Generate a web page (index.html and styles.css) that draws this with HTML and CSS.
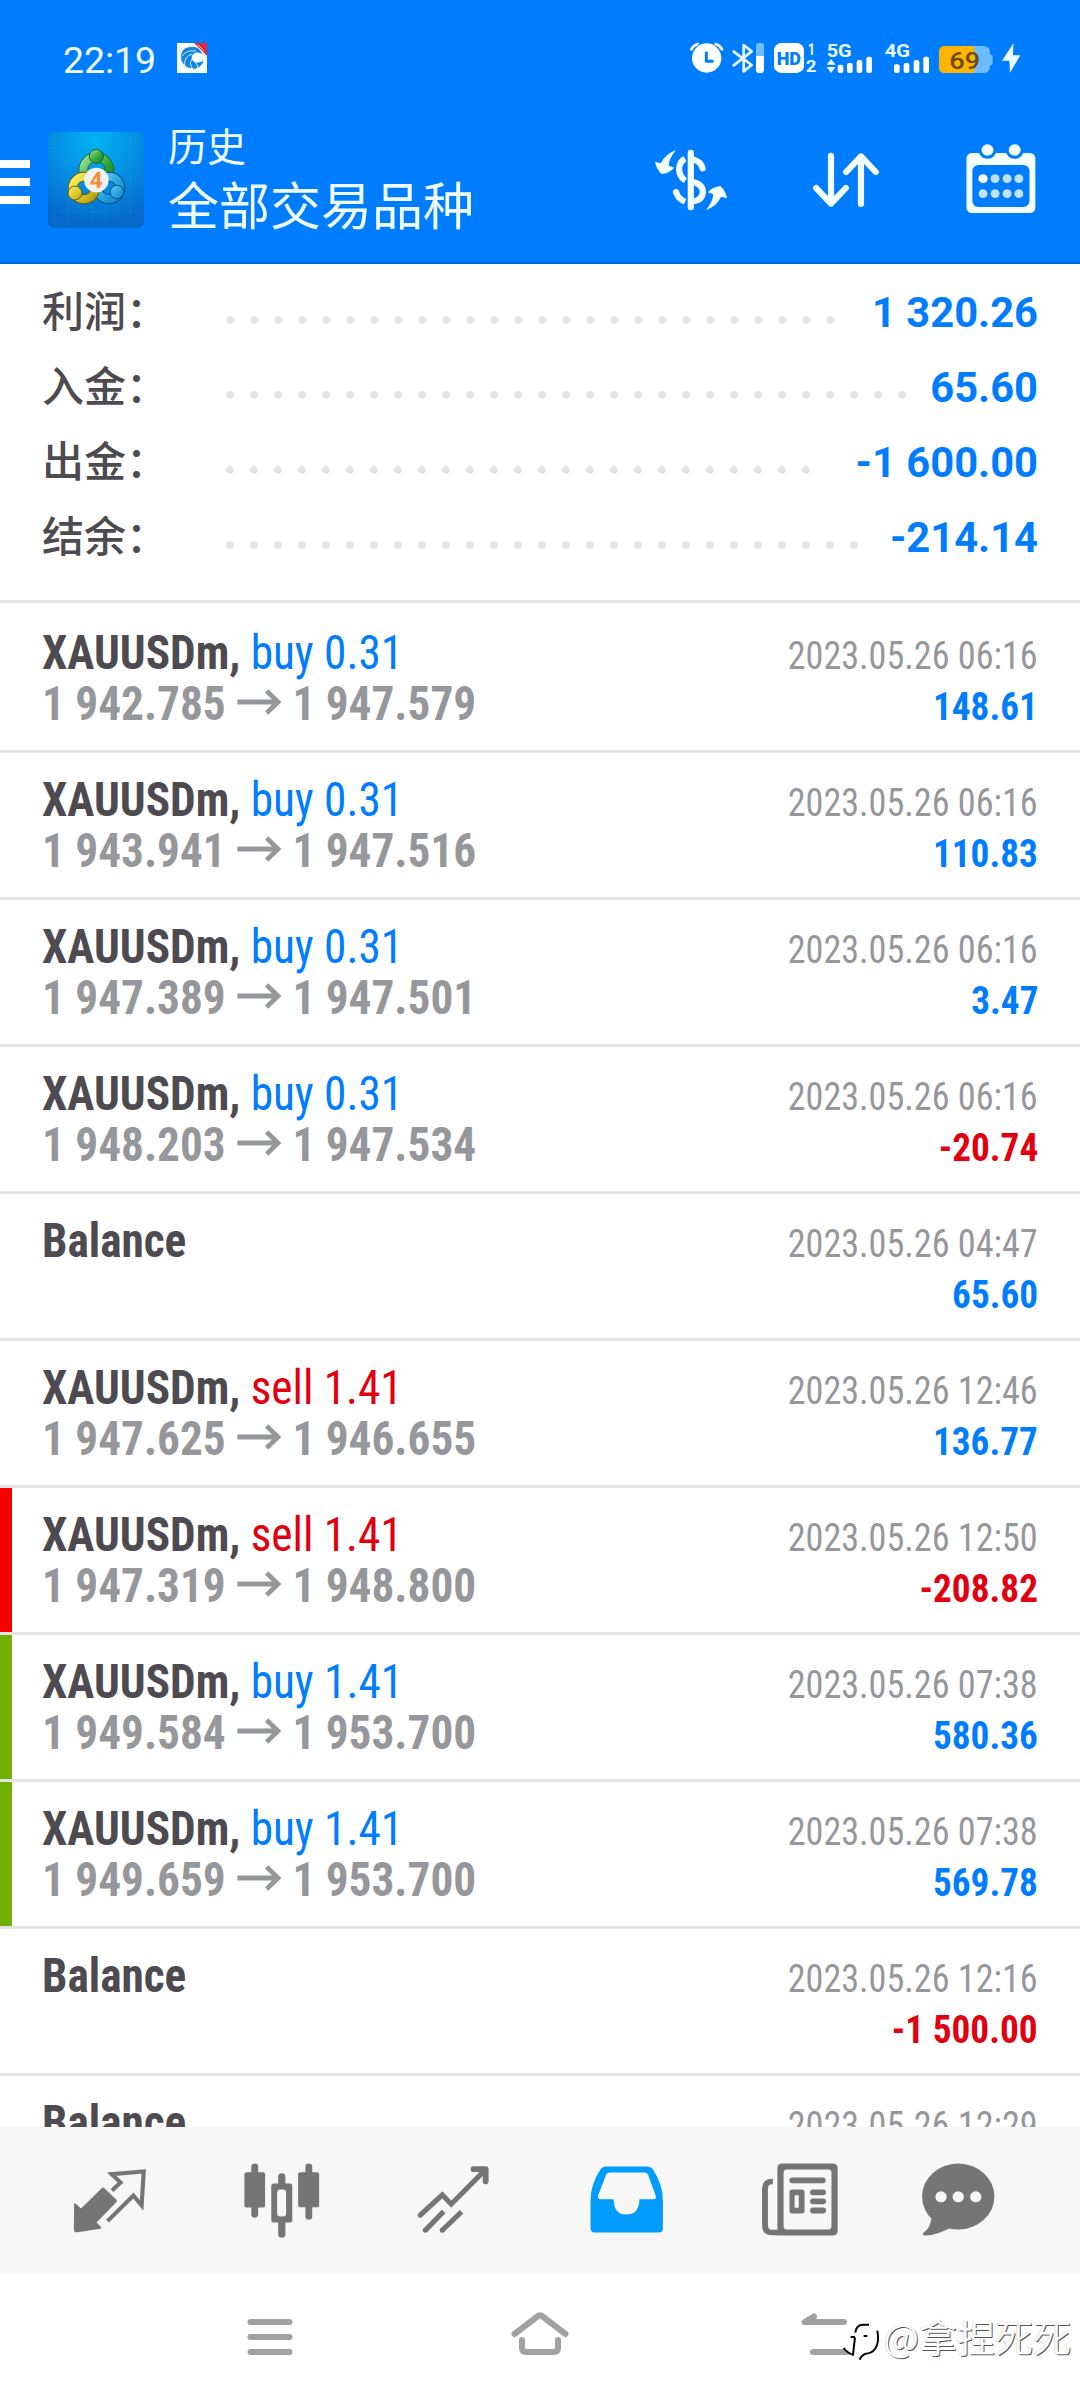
FILE: index.html
```html
<!DOCTYPE html>
<html lang="zh-CN">
<head>
<meta charset="utf-8">
<title>历史</title>
<link rel="stylesheet" href="styles.css">
</head>
<body>
<div class="screen">
  <header class="header">
    <div class="status">
      <span class="clock">22:19</span>
      <svg class="notif" viewBox="411 40 90 90">
        <rect x="411" y="40" width="90" height="90" fill="#f4ffff"/>
        <path d="M424 92 Q418 56 450 52 Q470 48 480 62 L488 74 Q476 66 464 70 Q452 76 456 90 Q464 102 478 98 Q488 96 491 90 Q488 110 466 117 Q434 118 424 92Z" fill="#1285e0"/>
        <path d="M426 80 Q438 60 468 64 M434 106 Q432 80 456 74 M458 118 Q446 100 456 88 M474 116 Q474 106 466 98" fill="none" stroke="#f4ffff" stroke-width="2.500"/>
        <path d="M462 40 H501 V78 Z" fill="#e5263c"/>
        <path d="M474 46 L492 64" stroke="#ffb0b0" stroke-width="3"/>
      </svg>
      <div class="indicators">
        <svg width="50" height="60" viewBox="0 0 150 180">
          <circle cx="80" cy="84" r="44" fill="#fff"/>
          <path d="M79 68 V94 H97" fill="none" stroke="#007dff" stroke-width="9" stroke-linejoin="round" stroke-linecap="round"/>
          <path d="M34 58 Q40 46 53 42 M107 42 Q120 46 126 58" fill="none" stroke="#fff" stroke-width="8" stroke-linecap="round"/>
        </svg>
        <svg width="40" height="60" viewBox="150 0 120 180">
          <path d="M161 65 L215 105 L191 124 V45 L215 64 L161 106" fill="none" stroke="#e8fbff" stroke-width="8" stroke-linejoin="round" stroke-linecap="round"/>
          <rect x="228" y="40" width="24" height="89" rx="10" fill="#fff"/>
          <path d="M228 78 V50 Q228 40 238 40 H242 Q252 40 252 50 V78 Z" fill="#6cbcff"/>
        </svg>
        <svg width="50" height="60" viewBox="270 0 150 180">
          <rect x="282" y="39" width="90" height="90" rx="22" fill="#fff"/>
          <text x="290" y="104" class="mark heavy" font-size="53" textLength="73" lengthAdjust="spacingAndGlyphs" fill="#007dff">HD</text>
          <text x="383" y="76" class="mark" font-size="50" textLength="22" lengthAdjust="spacingAndGlyphs" fill="#e8fbff">1</text>
          <text x="377" y="126" class="mark" font-size="50" textLength="32" lengthAdjust="spacingAndGlyphs" fill="#e8fbff">2</text>
        </svg>
        <svg width="60" height="60" viewBox="420 0 180 180">
          <text x="440" y="82" class="mark" font-size="56" textLength="75" lengthAdjust="spacingAndGlyphs" fill="#e8fbff">5G</text>
          <path d="M440 104 L453 87 L467 104 Z M440 111 H467 L453 129 Z" fill="#e8fbff"/>
          <g fill="#fff"><rect x="473" y="104" width="17" height="25" rx="6"/><rect x="501" y="99" width="17" height="30" rx="6"/><rect x="530" y="90" width="17" height="39" rx="6"/><rect x="559" y="80" width="17" height="49" rx="6"/></g>
        </svg>
        <svg width="55" height="60" viewBox="600 0 165 180">
          <text x="614" y="82" class="mark" font-size="56" textLength="76" lengthAdjust="spacingAndGlyphs" fill="#e8fbff">4G</text>
          <g fill="#fff"><rect x="642" y="103" width="17" height="26" rx="6"/><rect x="671" y="99" width="17" height="30" rx="6"/><rect x="701" y="90" width="17" height="39" rx="6"/><rect x="730" y="80" width="17" height="49" rx="6"/></g>
        </svg>
        <svg width="63" height="60" viewBox="765 0 189 180">
          <rect x="777" y="48" width="153" height="81" rx="18" fill="#6cbcff"/>
          <rect x="926" y="74" width="12" height="32" rx="5" fill="#6cbcff"/>
          <path d="M883 48 H795 Q777 48 777 66 V111 Q777 129 795 129 H883 Z" fill="#ffb400"/>
          <text x="808" y="117" class="num" font-size="72" textLength="93" lengthAdjust="spacingAndGlyphs" fill="#6b4c0c">69</text>
        </svg>
        <svg width="32" height="60" viewBox="954 0 96 180">
          <path d="M1000 40 L966 92 H988 L990 128 L1021 76 H999 Z" fill="#e8fbff"/>
        </svg>
      </div>
    </div>
    <div class="appbar">
      <svg class="menu" viewBox="0 0 30 44"><path d="M0 0H30V8H0Z M0 18H30V26H0Z M0 36H30V44H0Z" fill="#fff"/></svg>
      <svg class="logo" viewBox="24 306 288 288">
        <defs>
          <radialGradient id="bg" cx=".5" cy=".08" r=".9"><stop offset="0" stop-color="#00b4f2"/><stop offset=".5" stop-color="#048ee2"/><stop offset="1" stop-color="#0668c8"/></radialGradient>
          <linearGradient id="gr" x1="0" y1="0" x2="1" y2="1"><stop offset="0" stop-color="#9be094"/><stop offset=".6" stop-color="#2fa63c"/><stop offset="1" stop-color="#0e8a28"/></linearGradient>
          <linearGradient id="ye" x1="0" y1="0" x2="1" y2="1"><stop offset="0" stop-color="#f8f060"/><stop offset=".6" stop-color="#d8c828"/><stop offset="1" stop-color="#b09c10"/></linearGradient>
          <linearGradient id="bl" x1="0" y1="0" x2="1" y2="1"><stop offset="0" stop-color="#6cd0f8"/><stop offset=".6" stop-color="#24a0e0"/><stop offset="1" stop-color="#0a84cc"/></linearGradient>
        </defs>
        <rect x="24" y="306" width="288" height="288" rx="20" fill="url(#bg)"/>
        <path d="M44 306V594M82 306V594M120 306V594M158 306V594M196 306V594M234 306V594M272 306V594M24 354H312M24 402H312M24 450H312M24 498H312M24 546H312" stroke="#4cc0ff" stroke-opacity=".16" stroke-width="2"/>
        <circle cx="169" cy="420" r="39" fill="none" stroke="#14602c" stroke-width="29"/>
        <circle cx="169" cy="420" r="39" fill="none" stroke="url(#gr)" stroke-width="24"/>
        <circle cx="207" cy="474" r="34" fill="none" stroke="#0a4c84" stroke-width="29"/>
        <circle cx="207" cy="474" r="34" fill="none" stroke="url(#bl)" stroke-width="24"/>
        <circle cx="132" cy="474" r="34" fill="none" stroke="#5c5818" stroke-width="29"/>
        <circle cx="132" cy="474" r="34" fill="none" stroke="url(#ye)" stroke-width="24"/>
        <circle cx="169" cy="379" r="21" fill="url(#gr)" stroke="#14602c" stroke-width="3"/>
        <circle cx="105" cy="489" r="21" fill="url(#ye)" stroke="#5c5818" stroke-width="3"/>
        <circle cx="231" cy="486" r="20" fill="url(#bl)" stroke="#0a4c84" stroke-width="3"/>
        <circle cx="169" cy="450" r="37" fill="#f0f2f0"/>
        <text x="149" y="473" class="mark" font-size="67" fill="#f88c30">4</text>
      </svg>
      <div class="titles">
        <div class="title">历史</div>
        <div class="subtitle">全部交易品种</div>
      </div>
      <div class="actions">
        <svg viewBox="304.9 405 261.3 270" preserveAspectRatio="none">
          <g fill="none" stroke="#f4ffff" stroke-width="18">
            <path d="M435 458 V622" stroke-linecap="round"/>
            <path d="M442 478 Q464 484 469 505" stroke-linecap="round"/>
            <path d="M418 476 Q401 486 401 508 Q402 530 419 542"/>
            <path d="M440 546 Q470 552 470 576 Q468 602 440 604"/>
            <path d="M392 575 Q397 596 418 605"/>
          </g>
          <circle cx="392" cy="576" r="9" fill="#f4ffff"/>
          <path id="swap" d="M392 450 Q360 462 348 490 L331 485 Q334 506 350 522 Q372 520 387 503 L371 497 Q372 474 392 450Z" fill="#f4ffff"/>
          <use href="#swap" transform="rotate(180 435.5 540)"/>
        </svg>
        <svg viewBox="757.9 405 261.3 270" preserveAspectRatio="none">
          <path d="M845 467 V610 M802 564 L845 611 L888 564 M932 612 V470 M889 516 L932 469 L975 516" fill="none" stroke="#f4ffff" stroke-width="18" stroke-linecap="round" stroke-linejoin="round"/>
        </svg>
        <svg viewBox="1206.6 405 261.3 270" preserveAspectRatio="none">
          <rect x="1237" y="459" width="200" height="180" rx="16" fill="#f4ffff"/>
          <rect x="1254" y="495" width="166" height="126" rx="18" fill="#007dff"/>
          <g fill="#f4ffff" stroke="#007dff" stroke-width="9"><circle cx="1298" cy="450" r="22"/><circle cx="1377" cy="450" r="22"/></g>
          <circle cx="1285" cy="536" r="13.5" fill="#fff"/>
          <g fill="#bfe3ff"><circle cx="1320" cy="536" r="13"/><circle cx="1355" cy="536" r="13"/><circle cx="1389" cy="536" r="13"/><circle cx="1285" cy="581" r="13"/><circle cx="1320" cy="581" r="13"/><circle cx="1355" cy="581" r="13"/><circle cx="1389" cy="581" r="13"/></g>
        </svg>
      </div>
    </div>
  </header>

  <main class="content">
    <section class="summary">
      <div class="sum"><span class="label">利润：</span><i class="dots" style="--dots:26"></i><b>1 320.26</b></div>
      <div class="sum"><span class="label">入金：</span><i class="dots" style="--dots:29"></i><b>65.60</b></div>
      <div class="sum"><span class="label">出金：</span><i class="dots" style="--dots:25"></i><b>-1 600.00</b></div>
      <div class="sum"><span class="label">结余：</span><i class="dots" style="--dots:27"></i><b>-214.14</b></div>
    </section>
    <section class="deals">
      <article class="deal"><div class="info"><p><b>XAUUSDm,</b><span class="buy">buy 0.31</span></p><p class="prices">1 942.785<svg class="arrow" viewBox="0 0 46 26"><path d="M0 13H43M31 2L43 13L31 24"/></svg>1 947.579</p></div><div class="result"><time>2023.05.26 06:16</time><b>148.61</b></div></article>
      <article class="deal"><div class="info"><p><b>XAUUSDm,</b><span class="buy">buy 0.31</span></p><p class="prices">1 943.941<svg class="arrow" viewBox="0 0 46 26"><path d="M0 13H43M31 2L43 13L31 24"/></svg>1 947.516</p></div><div class="result"><time>2023.05.26 06:16</time><b>110.83</b></div></article>
      <article class="deal"><div class="info"><p><b>XAUUSDm,</b><span class="buy">buy 0.31</span></p><p class="prices">1 947.389<svg class="arrow" viewBox="0 0 46 26"><path d="M0 13H43M31 2L43 13L31 24"/></svg>1 947.501</p></div><div class="result"><time>2023.05.26 06:16</time><b>3.47</b></div></article>
      <article class="deal"><div class="info"><p><b>XAUUSDm,</b><span class="buy">buy 0.31</span></p><p class="prices">1 948.203<svg class="arrow" viewBox="0 0 46 26"><path d="M0 13H43M31 2L43 13L31 24"/></svg>1 947.534</p></div><div class="result"><time>2023.05.26 06:16</time><b class="loss">-20.74</b></div></article>
      <article class="deal"><div class="info"><p><b>Balance</b></p></div><div class="result"><time>2023.05.26 04:47</time><b>65.60</b></div></article>
      <article class="deal"><div class="info"><p><b>XAUUSDm,</b><span class="sell">sell 1.41</span></p><p class="prices">1 947.625<svg class="arrow" viewBox="0 0 46 26"><path d="M0 13H43M31 2L43 13L31 24"/></svg>1 946.655</p></div><div class="result"><time>2023.05.26 12:46</time><b>136.77</b></div></article>
      <article class="deal stop"><div class="info"><p><b>XAUUSDm,</b><span class="sell">sell 1.41</span></p><p class="prices">1 947.319<svg class="arrow" viewBox="0 0 46 26"><path d="M0 13H43M31 2L43 13L31 24"/></svg>1 948.800</p></div><div class="result"><time>2023.05.26 12:50</time><b class="loss">-208.82</b></div></article>
      <article class="deal take"><div class="info"><p><b>XAUUSDm,</b><span class="buy">buy 1.41</span></p><p class="prices">1 949.584<svg class="arrow" viewBox="0 0 46 26"><path d="M0 13H43M31 2L43 13L31 24"/></svg>1 953.700</p></div><div class="result"><time>2023.05.26 07:38</time><b>580.36</b></div></article>
      <article class="deal take"><div class="info"><p><b>XAUUSDm,</b><span class="buy">buy 1.41</span></p><p class="prices">1 949.659<svg class="arrow" viewBox="0 0 46 26"><path d="M0 13H43M31 2L43 13L31 24"/></svg>1 953.700</p></div><div class="result"><time>2023.05.26 07:38</time><b>569.78</b></div></article>
      <article class="deal"><div class="info"><p><b>Balance</b></p></div><div class="result"><time>2023.05.26 12:16</time><b class="loss">-1 500.00</b></div></article>
      <article class="deal"><div class="info"><p><b>Balance</b></p></div><div class="result"><time>2023.05.26 12:29</time></div></article>
    </section>
  </main>

  <nav class="tabs">
    <svg viewBox="186.6 226.5 261.3 270" preserveAspectRatio="none">
      <path d="M216 368 L221 370 L236 384 L296 323 Q300 319 304 323 L339 358 Q342 362 338 366 L281 426 L295 440 Q296 444 292 445 L226 455 Q215 457 215 446Z"/>
      <path class="line" stroke-width="12" d="M326 330 L351 306 L325 281 L418 273 L412 375 L388 345 L313 422"/>
    </svg>
    <svg viewBox="687.5 226.5 261.3 270" preserveAspectRatio="none">
      <rect x="729" y="249" width="20" height="162" rx="10"/><rect x="709" y="275" width="60" height="106" rx="6"/>
      <rect x="807" y="278" width="21" height="193" rx="10"/><rect x="787" y="309" width="61" height="117" rx="7"/><rect x="804" y="327" width="26" height="81" rx="9" fill="#f7f7f7"/>
      <rect x="886" y="249" width="20" height="168" rx="10"/><rect x="865" y="275" width="61" height="105" rx="6"/>
    </svg>
    <svg viewBox="1188.4 226.5 261.3 270" preserveAspectRatio="none">
      <path class="line" stroke-width="15" stroke-linecap="round" d="M1221 404 L1285 343 L1311 371 L1408 270"/>
      <path class="line" stroke-width="17" stroke-linecap="round" stroke-linejoin="round" d="M1376 266 H1411 V303"/>
      <path class="line" stroke-width="15" d="M1236 449 L1289 393 M1285 449 L1341 394"/>
      <circle cx="1236" cy="449" r="7.5"/><circle cx="1285" cy="449" r="7.5"/>
    </svg>
    <svg viewBox="121.2 226.5 261.3 270" preserveAspectRatio="none">
      <path fill="#009dff" fill-rule="evenodd" d="M190 258 H312 Q321 258 327 266 Q356 312 356 360 V444 Q356 456 344 456 H158 Q146 456 146 444 V360 Q146 312 175 266 Q181 258 190 258Z M203 276 Q194 276 191 283 L168 345 Q165 356 176 356 H213 Q214 402 250 402 Q287 402 288 356 H328 Q339 356 335 345 L313 283 Q310 276 301 276Z"/>
    </svg>
    <svg viewBox="622.1 226.5 261.3 270" preserveAspectRatio="none">
      <path fill-rule="evenodd" d="M704 249 H850 Q865 249 865 264 V450 Q865 465 850 465 H690 V264 Q690 249 704 249Z M718 267 Q708 267 708 277 V437 Q708 447 718 447 H837 Q847 447 847 437 V277 Q847 267 837 267Z"/>
      <path class="line" stroke-width="17" d="M677 303 Q654 302 654 325 V435 Q654 456 675 456 H692"/>
      <rect x="725" y="291" width="105" height="17" rx="8"/>
      <path fill-rule="evenodd" d="M733 327 H761 Q769 327 769 335 V391 Q769 399 761 399 H733 Q725 399 725 391 V335 Q725 327 733 327Z M740 344 V382 H752 V344Z"/>
      <rect x="785" y="327" width="46" height="17" rx="8"/><rect x="785" y="354" width="46" height="17" rx="8"/><rect x="785" y="381" width="46" height="18" rx="8"/>
    </svg>
    <svg viewBox="1084.6 226.5 261.3 270" preserveAspectRatio="none">
      <ellipse cx="1213" cy="348" rx="105" ry="99"/>
      <path d="M1128 400 Q1138 408 1134 420 Q1130 444 1112 457 Q1106 465 1118 465 Q1152 463 1188 443Z"/>
      <g fill="#f7f7f7"><circle cx="1163" cy="349" r="16.5"/><circle cx="1213" cy="349" r="16.5"/><circle cx="1264" cy="349" r="16.5"/></g>
    </svg>
  </nav>

  <nav class="system">
    <svg viewBox="225 2307 90 60"><path d="M250.500 2322H289.500M250.500 2337H289.500M250.500 2352H289.500"/></svg>
    <svg viewBox="495 2307 90 60"><path d="M514.500 2334 L538 2316 Q540 2314.500 542 2316 L565.500 2334 M522 2340 V2348 Q522 2352 526 2352 H554 Q558 2352 558 2348 V2340"/></svg>
    <svg viewBox="765 2307 90 60"><path d="M844 2322 H804.500 L814 2316.500 M813 2352 H850"/></svg>
  </nav>

  <div class="watermark">
    <svg viewBox="148 28 120 138">
      <path d="M152 122 Q176 100 176 88 Q182 52 212 46 H240 Q268 56 266 100 Q258 142 226 148 L205 162 L198 146 L176 146 Z" fill="#fff"/>
      <path d="M156 124 Q168 140 184 144 L190 92 M177 91 H190 M191 78 Q194 54 214 54 H232 M216 88 H227 M257 72 Q264 108 250 127 Q240 140 222 141 Q210 146 204 159" fill="none" stroke="#000" stroke-width="6"/>
    </svg>
    <span>@拿捏死死</span>
  </div>
</div>
</body>
</html>
```
FILE: styles.css
```css
* { box-sizing: border-box; }

body { margin: 0; }

p { margin: 0; }

svg { display: block; flex: none; }

.screen {
  position: relative;
  display: flex;
  flex-direction: column;
  width: 1080px;
  height: 2400px;
  background: #fff;
  font-family: Roboto, "Noto Sans CJK SC", sans-serif;
  overflow: hidden;
}

/* Header */
.header {
  flex: none;
  height: 264px;
  background: #007dff;
  border-bottom: 2px solid #0069d0;
  color: #effcff;
}

.status {
  display: flex;
  align-items: flex-start;
  height: 96px;
  padding: 30px 50px 0 63px;
}

.clock {
  width: 114px;
  margin-top: 8px;
  font-size: 37.4px;
  line-height: 44px;
}

.notif {
  width: 30px;
  height: 30px;
  margin-top: 13px;
}

.indicators {
  display: flex;
  margin-left: auto;
}

.mark { font-family: Roboto, sans-serif; font-weight: 700; }
.heavy { font-weight: 900; }
.num { font-family: Roboto, sans-serif; font-weight: 500; }

.appbar {
  display: flex;
  align-items: center;
  height: 168px;
  padding-right: 34.5px;
}

.menu { width: 30px; height: 44px; margin-top: 4px; }
.logo { width: 96px; height: 96px; margin-left: 18px; }

.titles {
  margin-left: 24px;
  padding-bottom: 7px;
  font-family: "Noto Sans CJK SC", sans-serif;
  font-weight: 400;
}

.title { font-size: 39px; line-height: 50px; }
.subtitle { margin-top: 3px; font-size: 51px; line-height: 62px; }

.actions {
  display: flex;
  gap: 65px;
  margin-left: auto;
}

.actions svg { width: 90px; height: 90px; }

/* Account totals */
.content {
  flex: none;
  height: 1863px;
  overflow: hidden;
}

.summary {
  height: 339px;
  padding: 7px 42px 0;
  border-bottom: 3px solid #e4e4e4;
  font-size: 42px;
  line-height: 75px;
}

.sum {
  display: flex;
  align-items: baseline;
  height: 75px;
}

.label {
  width: 184px;
  color: #4d4b50;
  font-family: "Noto Sans CJK SC", sans-serif;
  font-weight: 500;
}

.sum b {
  margin-left: auto;
  color: #007dff;
  font-size: 41.7px;
}

.dots {
  align-self: flex-start;
  width: calc(var(--dots) * 24px);
  height: 8px;
  margin-top: 45px;
  background: radial-gradient(circle at 4px 4px, #e4e4e4 3.6px, transparent 4.2px) 0 0 / 24px 8px;
}

/* Deal list */
.deal {
  display: flex;
  justify-content: space-between;
  height: 147px;
  padding-right: 42px;
  border-top: 3px solid #e4e4e4;
  font-stretch: 75%;
  line-height: 51px;
}

.deal:first-child { border-top-color: #fff; }

.deal::before {
  content: "";
  width: 12px;
  height: 144px;
  margin-right: 30px;
}

.stop::before { background: #f80000; }
.take::before { background: #70b000; }

.info {
  flex: 1;
  padding-top: 21px;
  color: #4d4b50;
  font-size: 48px;
  transform: scaleX(.943);
  transform-origin: left;
}

.info p {
  display: flex;
  gap: 11px;
  white-space: nowrap;
}

.buy { color: #007dff; }
.sell { color: #e0000f; }

.info .prices {
  align-items: center;
  gap: 11.2px;
  color: #96979b;
  font-weight: 700;
}

.arrow {
  width: 48.4px;
  height: 26px;
  margin-top: -3px;
  fill: none;
  stroke: #96979b;
  stroke-width: 5;
}

.result {
  display: flex;
  flex-direction: column;
  align-items: flex-end;
  padding-top: 25px;
  color: #96979b;
  font-size: 39px;
}

.result time, .result b {
  transform: scaleX(.927);
  transform-origin: right;
}

.result b {
  color: #007dff;
  transform: scaleX(.955);
}

.result .loss { color: #e0000f; }

/* Application tabs */
.tabs {
  display: grid;
  flex: none;
  grid-template-columns: repeat(5, 172.5px) 146px;
  place-items: center;
  height: 147px;
  padding-left: 23px;
  background: #f7f7f7;
  fill: #757575;
}

.tabs svg { width: 90px; height: 90px; }
.line { fill: none; stroke: #757575; }

/* System navigation */
.system {
  display: grid;
  flex: none;
  grid-template-columns: repeat(3, 270px);
  place-items: center;
  height: 126px;
  padding-left: 135px;
  background: #fff;
}

.system svg {
  width: 90px;
  height: 60px;
  fill: none;
  stroke: #a1a1a1;
  stroke-width: 6;
  stroke-linecap: round;
  stroke-linejoin: round;
}

.watermark {
  position: absolute;
  right: 9px;
  bottom: 36px;
  display: flex;
  align-items: center;
  color: #fff;
  font: 350 38px/56px "Noto Sans CJK SC", sans-serif;
  text-shadow: 1px 1px 0 #555, -0.5px -0.5px 0 #ccc;
}

.watermark svg { width: 40px; height: 46px; margin: 5px 2px 0 0; }
```
